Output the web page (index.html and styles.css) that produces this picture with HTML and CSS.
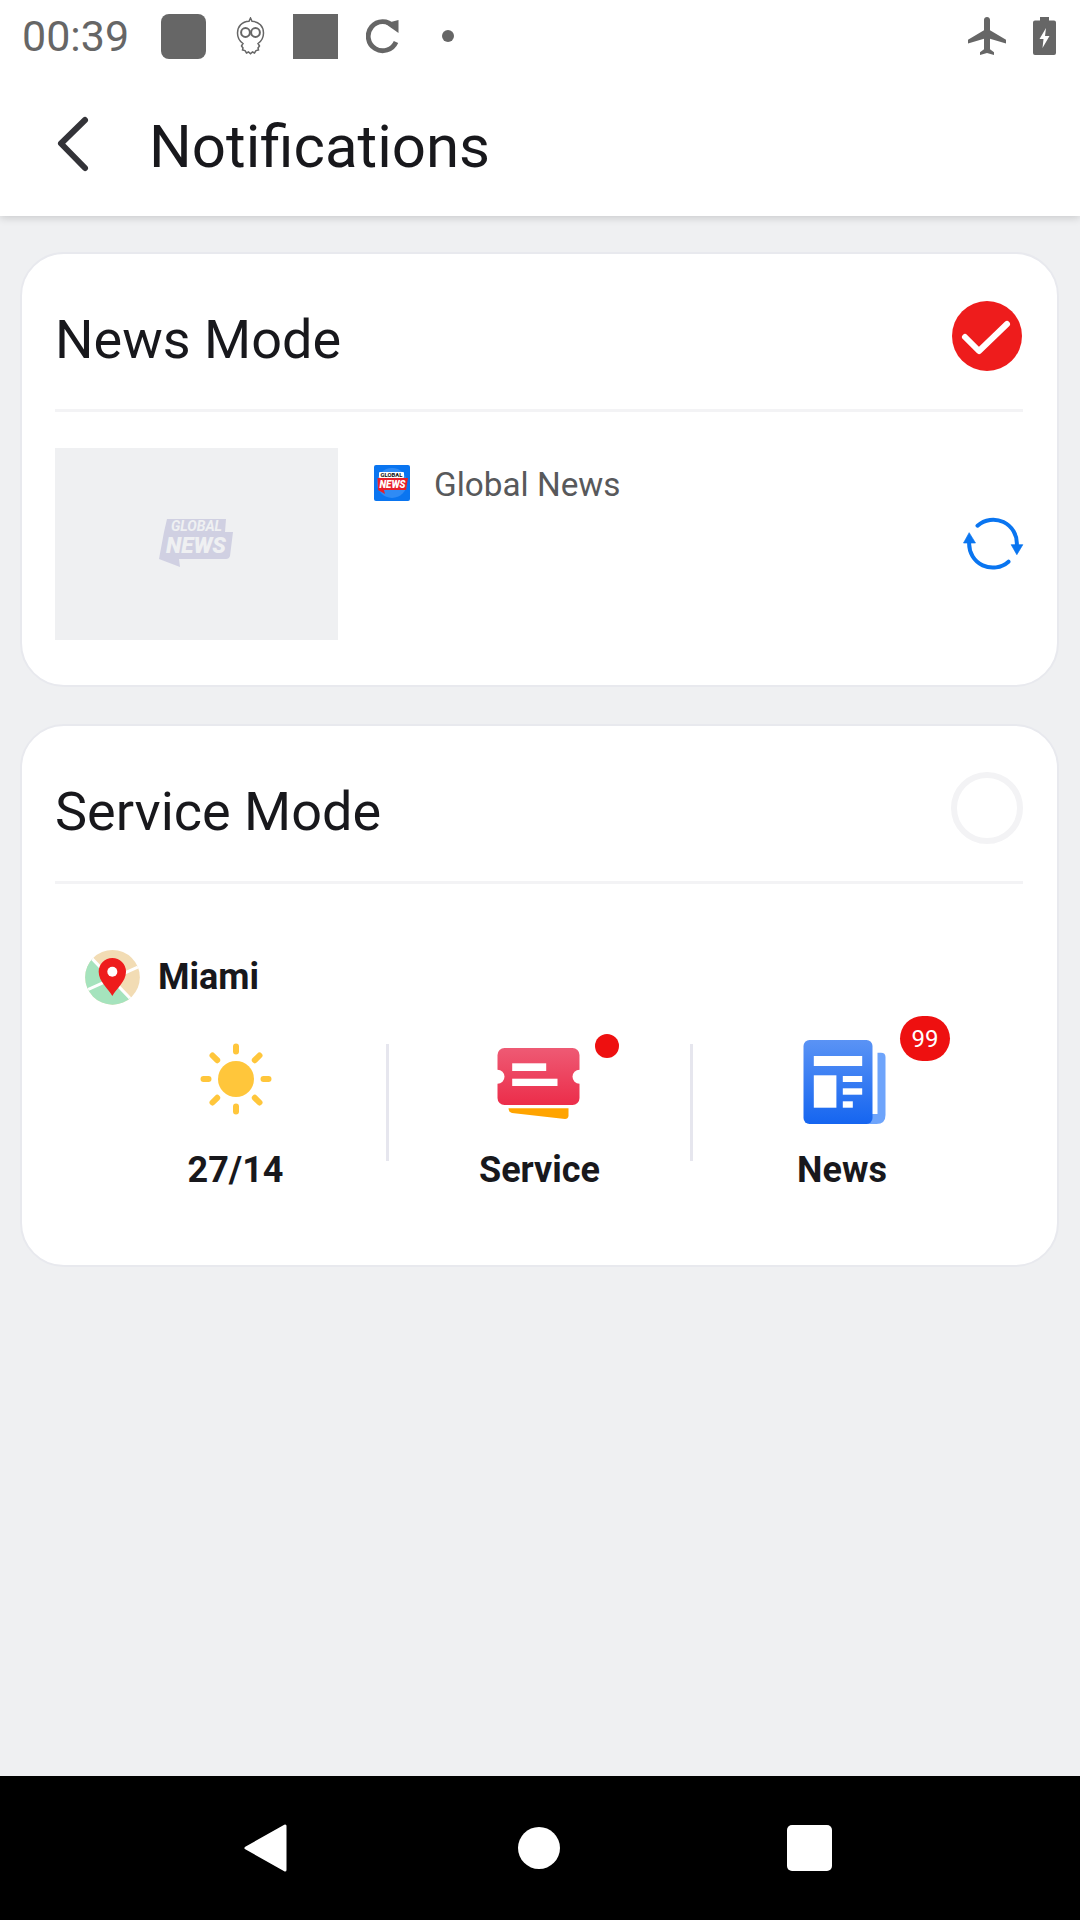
FILE: index.html
```html
<!DOCTYPE html>
<html lang="en">
<head>
<meta charset="utf-8">
<title>Notifications</title>
<link rel="stylesheet" href="styles.css">
</head>
<body>
<div class="screen">
  <div class="top">
    <div class="status">
      <span class="time">00:39</span>
      <span class="sq sq-round"></span>
      <svg class="ic-owl" viewBox="0 0 29 38" width="29" height="38"><path d="M14.500 1 L16 4.200 C23 4.600 27.500 9.500 27.500 16 C27.500 21 25 24.500 22 26.500 L23.500 29 L22 31 L22.500 33 L20 33.600 L18.500 36 L16.500 35 L14.500 36.800 L12.500 35 L10.500 36 L9 33.600 L6.500 33 L7 31 L5.500 29 L7 26.500 C4 24.500 1.500 21 1.500 16 C1.500 9.500 6 4.600 13 4.200 Z" fill="none" stroke="#666" stroke-width="1.500"/><circle cx="9.500" cy="15.500" r="4.400" fill="none" stroke="#666" stroke-width="2"/><circle cx="19.500" cy="15.500" r="4.400" fill="none" stroke="#666" stroke-width="2"/></svg>
      <span class="sq"></span>
      <svg class="ic-sync" viewBox="0 0 33 36" width="33" height="36"><path d="M27.500 8.500 A14.500 14.500 0 1 0 30 24" fill="none" stroke="#666" stroke-width="4.800"/><path d="M19 5.500 L32.500 2 L32.500 15 Z" fill="#666"/></svg>
      <span class="sdot"></span>
      <span class="status-gap"></span>
      <svg class="ic-plane" viewBox="2 2 19 20" width="38" height="38" preserveAspectRatio="none"><path d="M21 16v-2l-8-5V3.500c0-.83-.67-1.500-1.500-1.500S10 2.670 10 3.500V9l-8 5v2l8-2.500V19l-2 1.500V22l3.500-1 3.500 1v-1.500L13 19v-5.500l8 2.500z" fill="#666"/></svg>
      <svg class="ic-batt" viewBox="0 0 23 38" width="23" height="38"><path d="M7 0h9v3.500h5a2 2 0 0 1 2 2V36a2 2 0 0 1-2 2H2a2 2 0 0 1-2-2V5.500a2 2 0 0 1 2-2h5z" fill="#666"/><path d="M13 11 L6.500 22 L10.500 22 L9.500 31 L16.500 19 L12 19 Z" fill="#fff"/></svg>
    </div>
    <div class="appbar">
      <svg class="ic-back" viewBox="0 0 36 58" width="36" height="58"><path d="M29 5 L5 28.500 L29 53" fill="none" stroke="#333338" stroke-width="6" stroke-linecap="round" stroke-linejoin="round"/></svg>
      <h1 class="title">Notifications</h1>
    </div>
  </div>

  <main class="content">
    <section class="card">
      <div class="card-head">
        <h2 class="card-title">News Mode</h2>
        <svg class="radio" viewBox="0 0 70 70" width="70" height="70"><circle cx="35" cy="35" r="35" fill="#ee1c1c"/><path d="M13 36 L27 50 L55 23" fill="none" stroke="#fff" stroke-width="6" stroke-linecap="round" stroke-linejoin="round"/></svg>
      </div>
      <div class="news-body">
        <div class="thumb">
          <svg viewBox="0 0 76 52" width="76" height="52"><path d="M8 1 H67 L66 14 H74 L71 38 Q70 41 67 41 H20 L21 49 L0 41 L5 14 Z" fill="#d0d0e2"/><text x="12" y="12.500" class="logo-small" textLength="51" lengthAdjust="spacingAndGlyphs">GLOBAL</text><text x="7" y="35" class="logo-big" textLength="60" lengthAdjust="spacingAndGlyphs">NEWS</text></svg>
        </div>
        <div class="news-info">
          <div class="source">
            <svg viewBox="0 0 36 36" width="36" height="36"><rect width="36" height="36" rx="2" fill="#0a75f0"/><circle cx="18" cy="18" r="15" fill="#2f8bf5"/><rect x="5" y="7" width="25" height="6" rx="1" fill="#fff"/><text x="6.500" y="12.300" class="mini-a" textLength="22" lengthAdjust="spacingAndGlyphs">GLOBAL</text><path d="M3.500 13 H34 L32 25 H10 L11 29 L4 25 Z" fill="#e8202a"/><text x="5.500" y="23" class="mini-b" textLength="26" lengthAdjust="spacingAndGlyphs">NEWS</text></svg>
            <span class="source-name">Global News</span>
          </div>
          <svg class="ic-refresh" viewBox="180 700 200 180" width="67" height="60"><path d="M232 738 A71 71 0 0 1 350 795 M325 846 A71 71 0 0 1 207 790" fill="none" stroke="#0a75f0" stroke-width="12" stroke-linecap="round"/><path d="M333 795 H368 L350 825 Z M190 790 H226 L207 759 Z" fill="#0a75f0" stroke="#0a75f0" stroke-width="2" stroke-linejoin="round"/></svg>
        </div>
      </div>
    </section>

    <section class="card">
      <div class="card-head">
        <h2 class="card-title">Service Mode</h2>
        <span class="radio-empty"></span>
      </div>
      <div class="service-body">
        <div class="city">
          <svg viewBox="75 60 165 165" width="55" height="55"><defs><clipPath id="mapc"><circle cx="157.500" cy="142" r="82"/></clipPath></defs><g clip-path="url(#mapc)"><rect x="75" y="60" width="165" height="165" fill="#f2dcb4"/><path d="M60 48 L240 236 H60 Z" fill="#a5e3bd"/><path d="M60 48 L240 236 M75 183 L245 106" fill="none" stroke="#fff" stroke-width="9"/></g><path d="M157 198 C145 175 116 155 116 125 A41 41 0 0 1 198 125 C198 155 169 175 157 198 Z" fill="#ee1c1c"/><circle cx="157" cy="125" r="15" fill="#fff"/></svg>
          <span class="city-name">Miami</span>
        </div>
        <div class="stats">
          <div class="stat">
            <div class="stat-icon">
              <svg viewBox="0 0 120 100" width="120" height="100"><circle cx="60" cy="47" r="18" fill="#ffc63b"/><path d="M60 14.500 V19.500 M60 74.500 V79.500 M27.500 47 H32.500 M87.500 47 H92.500 M41.200 28.200 L36.500 23.500 M78.800 28.200 L83.500 23.500 M41.200 65.800 L36.500 70.500 M78.800 65.800 L83.500 70.500" stroke="#ffc63b" stroke-width="6" stroke-linecap="round" fill="none"/></svg>
            </div>
            <span class="stat-label">27/14</span>
          </div>
          <span class="sep"></span>
          <div class="stat">
            <div class="stat-icon">
              <svg viewBox="0 0 120 100" width="120" height="100"><defs><linearGradient id="tk" x1="0" y1="0" x2="0" y2="1"><stop offset="0" stop-color="#ee5a74"/><stop offset="1" stop-color="#ec2d4a"/></linearGradient></defs><rect x="17.500" y="16" width="82" height="57" rx="7" fill="url(#tk)"/><circle cx="17.500" cy="44.700" r="7" fill="#fff"/><circle cx="99.500" cy="44.700" r="7" fill="#fff"/><rect x="32.200" y="31.300" width="34" height="7.700" fill="#fff"/><rect x="32.200" y="46.700" width="45.300" height="7.300" fill="#fff"/><path d="M28.500 76.300 H88.500 V84 Q88 87 85 87 L32 81 Q28.500 80 28.500 76.300 Z" fill="#ffa400"/></svg>
              <span class="dot"></span>
            </div>
            <span class="stat-label">Service</span>
          </div>
          <span class="sep"></span>
          <div class="stat">
            <div class="stat-icon stat-icon-news">
              <svg viewBox="0 0 120 100" width="120" height="100"><defs><linearGradient id="np" x1="0" y1="0" x2="0" y2="1"><stop offset="0" stop-color="#5a93f5"/><stop offset="1" stop-color="#1565f0"/></linearGradient></defs><path d="M92.500 20.700 H96 Q100.500 20.700 100.500 25 V83 Q100.500 92 91.500 92 H80 V82 H92.500 Z" fill="#6ea4fb"/><rect x="18.500" y="8" width="69" height="84" rx="6" fill="url(#np)"/><rect x="28.800" y="24" width="48.400" height="10" fill="#fff"/><rect x="28.800" y="43.300" width="22.600" height="32.400" fill="#fff"/><rect x="57.800" y="44" width="19.400" height="6" fill="#fff"/><rect x="57.800" y="56.300" width="19.400" height="6.400" fill="#fff"/><rect x="57.800" y="69.300" width="10" height="6.400" fill="#fff"/></svg>
              <span class="badge">99</span>
            </div>
            <span class="stat-label stat-label-news">News</span>
          </div>
        </div>
      </div>
    </section>
  </main>

  <nav class="navbar">
    <svg viewBox="0 0 44 50" width="44" height="50"><path d="M42 3 V47 L3 25 Z" fill="#fff" stroke="#fff" stroke-width="3" stroke-linejoin="round"/></svg>
    <span class="nav-home"></span>
    <span class="nav-recent"></span>
  </nav>
</div>
</body>
</html>
```

FILE: styles.css
```css
* { box-sizing: border-box; }
html, body { margin: 0; padding: 0; }
body { font-family: Roboto, "Liberation Sans", sans-serif; color: #18181c; background: #eff0f2; }

.screen { width: 1080px; height: 1920px; display: flex; flex-direction: column; overflow: hidden; }

.top { height: 216px; background: #fff; box-shadow: 0 2px 8px rgba(0,0,0,.16); position: relative; flex: none; }

.status { height: 72px; display: flex; align-items: center; padding-left: 22px; color: #666; }
.time { font-size: 43px; width: 139px; line-height: 72px; }
.sq { width: 45px; height: 45px; background: #666; display: block; }
.sq-round { border-radius: 8px; }
.ic-owl { margin-left: 30px; margin-right: 28px; }
.ic-sync { margin-left: 28px; }
.sdot { width: 12px; height: 12px; border-radius: 50%; background: #666; margin-left: 43px; }
.status-gap { flex: 1; }
.ic-plane { margin-right: 27px; }
.ic-batt { margin-right: 24px; }

.appbar { height: 144px; display: flex; align-items: center; padding-left: 56px; }
.ic-back { flex: none; }
.title { margin: 6px 0 0 57px; font-size: 60px; font-weight: 400; line-height: 72px; }

.content { flex: 1; padding: 36px 21px 0 20px; display: flex; flex-direction: column; gap: 37px; }

.card { background: #fff; border: 2px solid #e8e9ee; border-radius: 44px; padding: 0 34px 0 33px; }
.card-head { height: 158px; padding-top: 9px; display: flex; align-items: center; justify-content: space-between; border-bottom: 3px solid #f3f3f5; }
.card-title { margin: 8px 0 0; font-size: 54px; font-weight: 400; line-height: 64px; }
.radio { margin-right: 1px; }
.radio-empty { width: 72px; height: 72px; border-radius: 50%; border: 6px solid #f3f3f5; }

.news-body { display: flex; padding: 36px 0 45px; }
.thumb { width: 283px; height: 192px; background: #eff0f2; display: flex; align-items: center; justify-content: center; flex: none; }
.logo-small { font: italic 700 14px Roboto, sans-serif; fill: #eff0f2; }
.logo-big { font: italic 900 22px Roboto, sans-serif; fill: #eff0f2; }
.news-info { flex: 1; position: relative; padding: 17px 0 0 36px; }
.source { display: flex; align-items: flex-start; gap: 24px; }
.source-name { font-size: 33.300px; color: #58595b; line-height: 38px; margin-top: 1px; }
.mini-a { font: 700 5.500px Roboto, sans-serif; fill: #111; }
.mini-b { font: italic 900 10px Roboto, sans-serif; fill: #fff; }
.ic-refresh { position: absolute; right: -4px; top: 65px; }

.service-body { padding: 66px 0 0 30px; height: 381px; }
.city { display: flex; align-items: center; gap: 18px; height: 54px; }
.city-name { font-size: 36px; font-weight: 700; }
.stats { display: flex; align-items: flex-start; margin: 28px 0 0; }
.stat { width: 301px; display: flex; flex-direction: column; align-items: center; }
.stat-icon { width: 120px; height: 100px; position: relative; }
.stat-icon-news { margin-left: 2px; }
.stat-label { font-size: 36px; font-weight: 700; line-height: 42px; margin-top: 17px; }
.stat-label-news { margin-right: 3px; }
.sep { width: 3px; height: 117px; margin-top: 12px; background: #e6e6ee; flex: none; }
.dot { position: absolute; left: 115.500px; top: 2px; width: 24px; height: 24px; border-radius: 50%; background: #ee1010; }
.badge { position: absolute; left: 115.500px; top: -16px; width: 50px; height: 45px; border-radius: 23px; background: #ee1010; color: #fff; font-size: 24px; display: flex; align-items: center; justify-content: center; }

.navbar { height: 144px; background: #000; position: relative; flex: none; display: flex; align-items: center; padding: 0 248px 0 243px; justify-content: space-between; }
.nav-home { width: 42px; height: 42px; border-radius: 50%; background: #fff; margin-left: 3px; }
.nav-recent { width: 45px; height: 46px; border-radius: 5px; background: #fff; }
```
